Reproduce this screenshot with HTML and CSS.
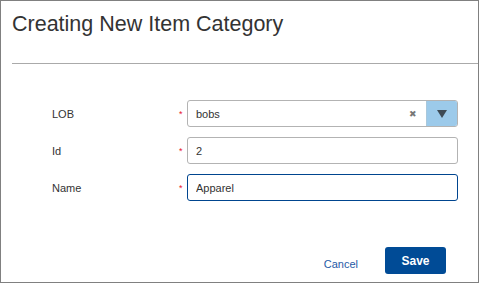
FILE: index.html
```html
<!DOCTYPE html>
<html lang="en">
<head>
    <meta charset="UTF-8">
    <title>Creating New Item Category</title>
    <link rel="stylesheet" href="styles.css">
</head>
<body>
    <div class="dialog">
        <div class="dialog-header">
            <h1>Creating New Item Category</h1>
        </div>
        <div class="divider"></div>

        <!-- Form rows -->
        <form class="item-form">
            <div class="form-row">
                <label>LOB</label>
                <span class="required">*</span>
                <div class="combo">
                    <span class="combo-value">bobs</span>
                    <span class="combo-clear">&#x2716;</span>
                    <span class="combo-toggle">
                        <svg width="10" height="8" viewBox="0 0 10 8"><path d="M0 0 L10 0 L5 8 Z" fill="#3d4a55"/></svg>
                    </span>
                </div>
            </div>
            <div class="form-row">
                <label>Id</label>
                <span class="required">*</span>
                <input type="text" class="field" value="2">
            </div>
            <div class="form-row">
                <label>Name</label>
                <span class="required">*</span>
                <input type="text" class="field focused" value="Apparel">
            </div>
        </form>

        <div class="dialog-footer">
            <a href="#cancel" class="cancel-link">Cancel</a>
            <button type="button" class="btn-save">Save</button>
        </div>
    </div>
</body>
</html>
```

FILE: styles.css
```css
body {
    margin: 0;
    padding: 0;
    background-color: #fff;
    font-family: "Liberation Sans", Arial, sans-serif;
}

.dialog {
    width: 479px;
    height: 283px;
    box-sizing: border-box;
    border: 1px solid #808080;
    background-color: #fff;
    display: flex;
    flex-direction: column;
}

.dialog-header h1 {
    margin: 0;
    padding: 11px 0 0 11px;
    font-size: 21.5px;
    font-weight: normal;
    color: #333;
    height: 62px;
    box-sizing: border-box;
}

.divider {
    margin-left: 11px;
    border-top: 1px solid #aaa;
}

.item-form {
    margin: 36px 0 0 0;
    display: flex;
    flex-direction: column;
    gap: 10px;
}

.form-row {
    display: flex;
    align-items: center;
    height: 27px;
}

.form-row label {
    width: 127px;
    padding-left: 51px;
    font-size: 11px;
    color: #333;
}

.required {
    width: 8px;
    color: #e8112d;
    font-size: 9px;
    position: relative;
    top: 0;
}

.field,
.combo {
    width: 271px;
    height: 27px;
    box-sizing: border-box;
    border: 1px solid #b3b3b3;
    border-radius: 3px;
    font-family: "Liberation Sans", Arial, sans-serif;
    font-size: 11px;
    color: #333;
    padding: 0 0 0 8px;
    margin: 0;
    background-color: #fff;
}

.field.focused {
    border-color: #00458f;
    outline: none;
}

.combo {
    display: flex;
    align-items: center;
    padding: 0 0 0 8px;
    overflow: hidden;
}

.combo-value {
    flex: 1;
}

.combo-clear {
    width: 8px;
    font-size: 9px;
    color: #777;
    margin-right: 9px;
}

.combo-toggle {
    width: 30px;
    height: 100%;
    background-color: #9ccaea;
    border-left: 1px solid #a9c8dc;
    display: flex;
    align-items: center;
    justify-content: center;
}

.dialog-footer {
    margin-top: auto;
    display: flex;
    justify-content: flex-end;
    align-items: center;
    padding: 0 32px 8px 0;
    gap: 27px;
}

.cancel-link {
    font-size: 11px;
    color: #1f5aa6;
    text-decoration: none;
    margin-top: 6px;
}

.btn-save {
    width: 61px;
    height: 27px;
    border: none;
    border-radius: 3px;
    background-color: #004b96;
    color: #fff;
    font-family: "Liberation Sans", Arial, sans-serif;
    font-size: 12px;
    font-weight: bold;
}
```
